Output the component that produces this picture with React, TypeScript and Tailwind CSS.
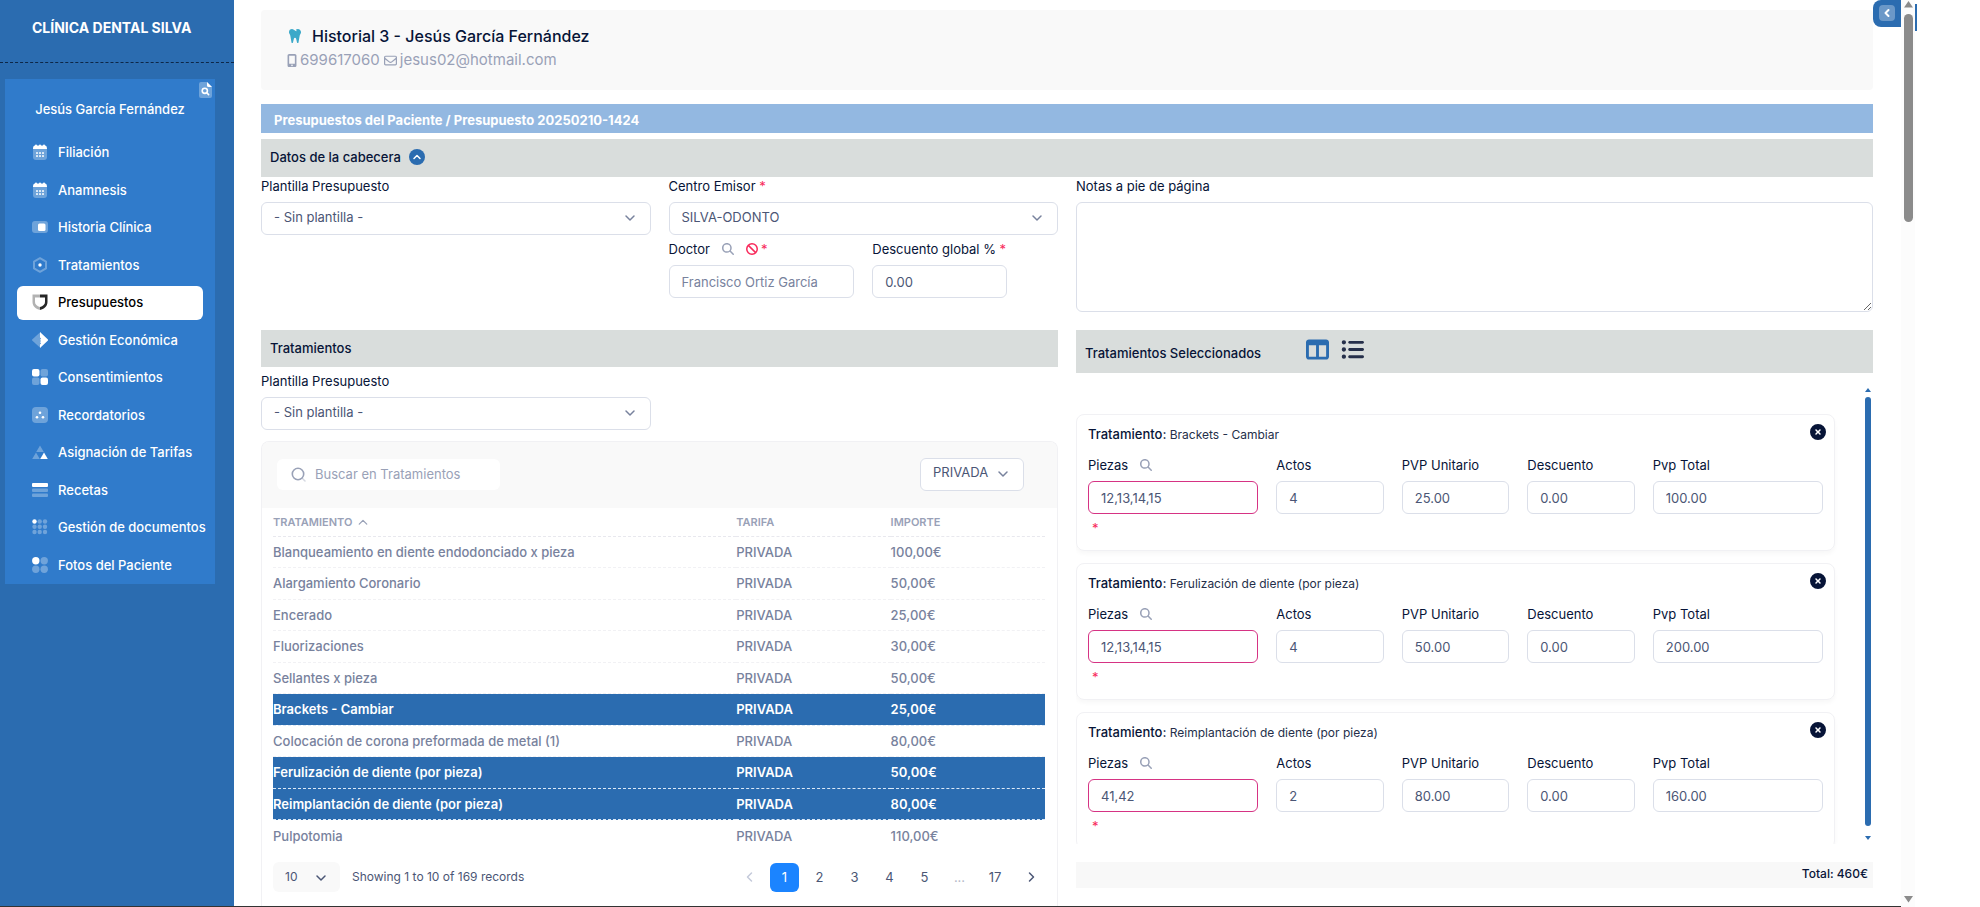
import { useState } from "react";
import type { ReactNode } from "react";
import {
    FaBan,
    FaCircleXmark,
    FaListUl,
    FaMagnifyingGlass,
    FaMobileScreenButton,
    FaRegEnvelope,
    FaTableColumns,
    FaTooth,
} from "react-icons/fa6";

interface ITreatment {
    name: string;
    price: string;
    selected?: boolean;
}

interface ISelectedTreatment {
    name: string;
    pieces: string;
    acts: string;
    unitPrice: string;
    discount: string;
    total: string;
}

const treatments: ITreatment[] = [
    { name: "Blanqueamiento en diente endodonciado x pieza", price: "100,00€" },
    { name: "Alargamiento Coronario", price: "50,00€" },
    { name: "Encerado", price: "25,00€" },
    { name: "Fluorizaciones", price: "30,00€" },
    { name: "Sellantes x pieza", price: "50,00€" },
    { name: "Brackets - Cambiar", price: "25,00€", selected: true },
    { name: "Colocación de corona preformada de metal (1)", price: "80,00€" },
    { name: "Ferulización de diente (por pieza)", price: "50,00€", selected: true },
    { name: "Reimplantación de diente (por pieza)", price: "80,00€", selected: true },
    { name: "Pulpotomia", price: "110,00€" },
];

const selectedTreatments: ISelectedTreatment[] = [
    { name: "Brackets - Cambiar", pieces: "12,13,14,15", acts: "4", unitPrice: "25.00", discount: "0.00", total: "100.00" },
    { name: "Ferulización de diente (por pieza)", pieces: "12,13,14,15", acts: "4", unitPrice: "50.00", discount: "0.00", total: "200.00" },
    { name: "Reimplantación de diente (por pieza)", pieces: "41,42", acts: "2", unitPrice: "80.00", discount: "0.00", total: "160.00" },
];

/* Duotone menu icons, drawn on a 16x16 grid */
const Calendar = () => (
    <>
        <rect x="1" y="3" width="14" height="13" rx="3" opacity=".3" />
        <path d="M3 1.500a1 1 0 0 1 2 0h2a1 1 0 0 1 2 0h2a1 1 0 0 1 2 0c1.500.200 2 1.500 2 3.500H1c0-2 .500-3.300 2-3.500z" />
        <g opacity=".8">
            <rect x="4" y="8" width="2" height="2" rx=".5" />
            <rect x="7" y="8" width="2" height="2" rx=".5" />
            <rect x="10" y="8" width="2" height="2" rx=".5" />
            <rect x="4" y="11" width="2" height="2" rx=".5" />
            <rect x="7" y="11" width="2" height="2" rx=".5" />
            <rect x="10" y="11" width="2" height="2" rx=".5" />
        </g>
    </>
);

const menuItems: { label: string; icon: ReactNode }[] = [
    { label: "Filiación", icon: <Calendar /> },
    { label: "Anamnesis", icon: <Calendar /> },
    {
        label: "Historia Clínica",
        icon: (
            <>
                <rect x="0" y="2" width="16" height="12" rx="3" opacity=".3" />
                <rect x="6" y="4.500" width="7.500" height="7.500" rx="1.500" />
            </>
        ),
    },
    {
        label: "Tratamientos",
        icon: (
            <>
                <path d="M8 1.200 14 4.600v6.800L8 14.800 2 11.400V4.600z" fill="none" stroke="currentColor" strokeWidth="2" strokeLinejoin="round" opacity=".3" />
                <circle cx="8" cy="8" r="1.700" />
            </>
        ),
    },
    {
        label: "Presupuestos",
        icon: (
            <>
                <path d="M8 0.500H0.500v7.500c0 4.500 3.500 7 7.500 8v-3C5 12 3 10.500 3 8V3.500h5z" opacity=".3" />
                <path d="M8 0.500h7.500v7.500c0 4.500-3.500 7-7.500 8v-3c3-1 5-2.500 5-5V3.500H8z" opacity=".85" />
            </>
        ),
    },
    {
        label: "Gestión Económica",
        icon: (
            <>
                <path d="M8.500 0v16L.400 8.700a1 1 0 0 1 0-1.400z" opacity=".3" />
                <path d="M8 0l7.700 7.300a1 1 0 0 1 0 1.400L8 16v-3.500l1-1-1-1.500 1-1-1-1 1-1.500-1-1z" />
            </>
        ),
    },
    {
        label: "Consentimientos",
        icon: (
            <>
                <rect x="0" y="0" width="7.500" height="7.500" rx="2" />
                <rect x="8.500" y="8.500" width="7.500" height="7.500" rx="2" />
                <rect x="8.500" y="0" width="7.500" height="7.500" rx="2" opacity=".3" />
                <rect x="0" y="8.500" width="7.500" height="7.500" rx="2" opacity=".3" />
            </>
        ),
    },
    {
        label: "Recordatorios",
        icon: (
            <>
                <rect width="16" height="16" rx="4" opacity=".3" />
                <circle cx="8" cy="5.800" r="1.300" />
                <circle cx="5" cy="10.300" r="1.300" />
                <circle cx="11" cy="10.300" r="1.300" />
            </>
        ),
    },
    {
        label: "Asignación de Tarifas",
        icon: (
            <>
                <path d="M8 1.500l3.800 6.500H4.200zM4 8.500 7.800 15H.200z" opacity=".3" />
                <path d="M12 8.500l3.800 6.500H8.200z" />
            </>
        ),
    },
    {
        label: "Recetas",
        icon: (
            <>
                <rect y="1" width="16" height="4" rx="1" />
                <rect y="6.500" width="16" height="3.500" rx="1" opacity=".3" />
                <rect y="11.500" width="16" height="3.500" rx="1" opacity=".3" />
            </>
        ),
    },
    {
        label: "Gestión de documentos",
        icon: (
            <>
                <circle cx="2.500" cy="2.500" r="2.200" />
                <g opacity=".3">
                    <circle cx="7.700" cy="2.500" r="2.200" />
                    <circle cx="13" cy="2.500" r="2.200" />
                    <circle cx="2.500" cy="7.700" r="2.200" />
                    <circle cx="7.700" cy="7.700" r="2.200" />
                    <circle cx="13" cy="7.700" r="2.200" />
                    <circle cx="2.500" cy="13" r="2.200" />
                    <circle cx="7.700" cy="13" r="2.200" />
                    <circle cx="13" cy="13" r="2.200" />
                </g>
            </>
        ),
    },
    {
        label: "Fotos del Paciente",
        icon: (
            <>
                <circle cx="3.800" cy="3.800" r="3.700" />
                <g opacity=".3">
                    <circle cx="12.200" cy="3.800" r="3.700" />
                    <circle cx="3.800" cy="12.200" r="3.700" />
                    <circle cx="12.200" cy="12.200" r="3.700" />
                </g>
            </>
        ),
    },
];

const Chevron = ({ className, d = "M2 4l4 4 4-4" }: { className?: string; d?: string }) => (
    <svg viewBox="0 0 12 12" className={className} fill="none" stroke="currentColor" strokeWidth="1.500" strokeLinecap="round" strokeLinejoin="round" aria-hidden="true">
        <path d={d} />
    </svg>
);

const Required = () => <span className="text-[#f8285a]">*</span>;

interface SelectProps {
    id: string;
    options: string[];
    label?: string;
}

const Select = ({ id, options, label }: SelectProps) => (
    <div className="relative">
        <select
            id={id}
            aria-label={label}
            className="block h-[33px] w-full appearance-none rounded-md border border-[#dbdfe9] bg-white pr-7 pb-1 pl-3 text-[#4b5675] outline-none"
        >
            {options.map((option) => (
                <option key={option}>{option}</option>
            ))}
        </select>
        <Chevron className="pointer-events-none absolute top-2.5 right-[15px] size-3 text-[#78829d]" />
    </div>
);

interface FieldProps {
    id: string;
    label: string;
    value: string;
    className: string;
    search?: boolean;
}

const Field = ({ id, label, value, className, search }: FieldProps) => (
    <div className={className}>
        <div className="flex h-5 items-center gap-3">
            <label htmlFor={id}>{label}</label>
            {search && (
                <button type="button" aria-label="Buscar piezas" className="text-[#99a1b7]">
                    <FaMagnifyingGlass className="size-3" />
                </button>
            )}
        </div>
        <input
            id={id}
            defaultValue={value}
            className={
                search
                    ? "mt-1.5 h-[33px] w-full rounded-md border border-[#d63384] px-3 text-[#4b5675] outline-none"
                    : "mt-1.5 h-[33px] w-full rounded-md border border-[#dbdfe9] px-3 text-[#4b5675] outline-none"
            }
        />
        {search && <p className="mt-1 h-4 pl-1"><Required /></p>}
    </div>
);

const Sidebar = () => {
    const [active, setActive] = useState("Presupuestos");
    return (
        <aside className="w-[234px] shrink-0 bg-[#2b6cb0] text-white">
            <div className="flex h-[63px] items-start border-b border-dashed border-[#0d2747] pt-4 pl-8">
                <h1 className="text-sm leading-6 font-bold">CLÍNICA DENTAL SILVA</h1>
            </div>

            <div className="mt-4 mr-[19px] ml-[5px] bg-[#307bcb] pb-px">
                <div className="flex h-5 justify-end pt-px pr-[3px]">
                    <button type="button" aria-label="Buscar paciente">
                        <svg viewBox="0 0 13 16" className="h-4 w-[13px]" fill="currentColor">
                            <path d="M2 0h6l5 5v9a2 2 0 0 1-2 2H2a2 2 0 0 1-2-2V2a2 2 0 0 1 2-2z" opacity=".3" />
                            <path d="M8 0l5 5H9.500A1.500 1.500 0 0 1 8 3.500z" />
                            <circle cx="5.800" cy="8.800" r="2.600" fill="none" stroke="currentColor" strokeWidth="1.600" />
                            <path d="M7.800 10.800l1.800 1.800" stroke="currentColor" strokeWidth="1.600" strokeLinecap="round" />
                        </svg>
                    </button>
                </div>
                <p className="pb-4 text-center leading-[21px] font-medium">Jesús García Fernández</p>

                {/* Patient menu */}
                <nav className="flex h-[447px] flex-col justify-between px-3">
                    {menuItems.map((item) => (
                        <button
                            key={item.label}
                            type="button"
                            onClick={() => setActive(item.label)}
                            className={
                                item.label === active
                                    ? "flex h-[34px] items-center gap-2.5 rounded-md bg-white px-[15px] pb-0.5 font-medium text-black"
                                    : "flex h-[34px] items-center gap-2.5 rounded-md px-[15px] pb-0.5 font-medium text-white"
                            }
                        >
                            <svg viewBox="0 0 16 16" className="size-4 shrink-0" fill="currentColor" aria-hidden="true">
                                {item.icon}
                            </svg>
                            <span className="whitespace-nowrap">{item.label}</span>
                        </button>
                    ))}
                </nav>
            </div>
        </aside>
    );
};

const HeaderForm = () => (
    <div className="grid grid-cols-2 gap-[18px]">
        <div className="grid grid-cols-2 gap-[18px]">
            <div>
                <label htmlFor="plantilla" className="mb-1.5 block leading-[19px]">Plantilla Presupuesto</label>
                <Select id="plantilla" options={["- Sin plantilla -"]} />
            </div>

            <div>
                <label htmlFor="centro" className="mb-1.5 block leading-[19px]">
                    Centro Emisor <Required />
                </label>
                <Select id="centro" options={["SILVA-ODONTO"]} />

                <div className="mt-1 grid grid-cols-2 gap-[18px]">
                    <div>
                        <div className="flex h-5 items-center">
                            <label htmlFor="doctor">Doctor</label>
                            <button type="button" aria-label="Buscar doctor" className="ml-3 text-[#99a1b7]">
                                <FaMagnifyingGlass className="size-3" />
                            </button>
                            <button type="button" aria-label="Quitar doctor" className="mr-[3px] ml-3 text-[#f8285a]">
                                <FaBan className="size-3" />
                            </button>
                            <Required />
                        </div>
                        <input
                            id="doctor"
                            placeholder="Francisco Ortiz García"
                            className="mt-1.5 h-[33px] w-full rounded-md border border-[#dbdfe9] px-3 outline-none placeholder:text-[#78829d]"
                        />
                    </div>
                    <div>
                        <label htmlFor="descuento" className="block h-5 leading-5 whitespace-nowrap">
                            Descuento global % <Required />
                        </label>
                        <input
                            id="descuento"
                            defaultValue="0.00"
                            className="mt-1.5 h-[33px] w-[135px] rounded-md border border-[#dbdfe9] px-3 text-[#4b5675] outline-none"
                        />
                    </div>
                </div>
            </div>
        </div>

        <div>
            <label htmlFor="notas" className="mb-1.5 block leading-[19px]">Notas a pie de página</label>
            <textarea id="notas" className="block h-[110px] w-full rounded-md border border-[#dbdfe9] px-3 py-2 outline-none" />
        </div>
    </div>
);

const TreatmentTable = () => (
    <div className="mt-[11px] flex min-h-0 flex-1 flex-col overflow-hidden rounded-t-lg border-x border-t border-[#f1f1f4]">
        <div className="flex h-[66px] shrink-0 items-center justify-between bg-[#f9f9f9] pr-[33px] pb-0.5 pl-[15px]">
            <div className="flex h-[31px] w-[223px] items-center rounded-md bg-white pl-[14px]">
                <svg viewBox="0 0 15 15" className="size-[15px]" fill="none" stroke="#99a1b7" aria-hidden="true">
                    <circle cx="7" cy="7" r="5.700" strokeWidth="1.600" />
                    <path d="M11.500 11.500l2.500 2.500" strokeWidth="1.500" strokeLinecap="round" opacity=".4" />
                </svg>
                <input
                    type="search"
                    aria-label="Buscar en Tratamientos"
                    placeholder="Buscar en Tratamientos"
                    className="ml-[9px] min-w-0 flex-1 outline-none placeholder:text-[#99a1b7]"
                />
            </div>
            <div className="w-[104px]">
                <Select id="tarifa" label="Tarifa" options={["PRIVADA"]} />
            </div>
        </div>

        <div className="pr-3 pl-[11px]">
            <table className="h-[343px] w-full table-fixed border-collapse text-left">
                <thead>
                    <tr className="h-7 border-b border-dashed border-[#e8e8ee] text-[11px] text-[#99a1b7]">
                        <th className="w-3/5 font-semibold">
                            <button type="button" className="flex items-center gap-1.5">
                                TRATAMIENTO
                                <Chevron className="size-2.5" d="M1.500 8.500L6 4l4.500 4.500" />
                            </button>
                        </th>
                        <th className="w-1/5 font-semibold">TARIFA</th>
                        <th className="w-1/5 font-semibold">IMPORTE</th>
                    </tr>
                </thead>
                <tbody>
                    {treatments.map((treatment) => (
                        <tr
                            key={treatment.name}
                            className={
                                treatment.selected
                                    ? "h-[31px] border-y border-dashed border-[#dbe9f8] bg-[#2b6cb0] font-semibold text-white"
                                    : "h-[31px] border-b border-dashed border-[#f1f1f4] font-medium text-[#78829d] last:border-0"
                            }
                        >
                            <td>{treatment.name}</td>
                            <td>PRIVADA</td>
                            <td>{treatment.price}</td>
                        </tr>
                    ))}
                </tbody>
            </table>
        </div>

        {/* Pagination */}
        <div className="mt-[11px] flex items-center pr-3 pl-[11px] text-[#4b5675]">
            <div className="relative">
                <select aria-label="Registros por página" className="block h-[30px] w-[67px] appearance-none rounded-md bg-[#f9f9f9] pl-3 text-xs outline-none">
                    <option>10</option>
                </select>
                <Chevron className="pointer-events-none absolute top-2.5 right-[13px] size-3" />
            </div>
            <p className="ml-3 text-xs">Showing 1 to 10 of 169 records</p>
            <nav className="ml-auto flex items-center gap-1.5">
                <button type="button" aria-label="Anterior" disabled className="flex h-[29px] w-[29px] items-center justify-center text-[#c4cada]">
                    <Chevron className="size-3" d="M7.500 2l-4 4 4 4" />
                </button>
                <button type="button" className="h-[29px] w-[29px] rounded-md bg-[#1b84ff] text-white">1</button>
                <button type="button" className="h-[29px] w-[29px]">2</button>
                <button type="button" className="h-[29px] w-[29px]">3</button>
                <button type="button" className="h-[29px] w-[29px]">4</button>
                <button type="button" className="h-[29px] w-[29px]">5</button>
                <span className="w-[29px] text-center text-[#b5bac8]">...</span>
                <button type="button" className="h-[29px] w-[30px]">17</button>
                <button type="button" aria-label="Siguiente" className="flex h-[29px] w-[29px] items-center justify-center">
                    <Chevron className="size-3" d="M4.500 2l4 4-4 4" />
                </button>
            </nav>
        </div>
    </div>
);

const TreatmentCard = ({ treatment, index }: { treatment: ISelectedTreatment; index: number }) => (
    <article className="h-[137px] shrink-0 rounded-lg border border-[#f1f1f4] px-[11px] pt-[9px] shadow-[0_3px_4px_0_rgba(0,0,0,0.03)]">
        <div className="flex items-start justify-between">
            <h3 className="text-xs leading-5 font-normal text-[#252f4a]">
                <span className="text-[13px] font-medium text-[#071437]">Tratamiento:</span> {treatment.name}
            </h3>
            <button type="button" aria-label="Quitar tratamiento" className="-mr-[3px] text-[#071437]">
                <FaCircleXmark className="size-4" />
            </button>
        </div>
        <div className="mt-2.5 grid grid-cols-12 gap-[18px]">
            <Field id={`piezas-${index}`} label="Piezas" value={treatment.pieces} className="col-span-3" search />
            <Field id={`actos-${index}`} label="Actos" value={treatment.acts} className="col-span-2" />
            <Field id={`pvp-${index}`} label="PVP Unitario" value={treatment.unitPrice} className="col-span-2" />
            <Field id={`dto-${index}`} label="Descuento" value={treatment.discount} className="col-span-2" />
            <Field id={`total-${index}`} label="Pvp Total" value={treatment.total} className="col-span-3" />
        </div>
    </article>
);

const SelectedTreatments = () => (
    <section className="flex min-h-0 flex-col">
        <div className="flex h-[43px] shrink-0 items-center bg-[#d9dddc] px-[9px]">
            <h2 className="pt-0.5 font-medium">Tratamientos Seleccionados</h2>
            <button type="button" aria-label="Vista en columnas" className="mb-1 ml-[45px] text-[#2b6cb0]">
                <FaTableColumns className="size-[23px]" />
            </button>
            <button type="button" aria-label="Vista en lista" className="mb-1 ml-3 text-[#252f4a]">
                <FaListUl className="size-[23px]" />
            </button>
        </div>

        <div className="mt-3 flex h-[459px] shrink-0">
            <div className="flex min-w-0 flex-1 flex-col gap-3 overflow-hidden pt-[29px] pr-[30px]">
                {selectedTreatments.map((treatment, i) => (
                    <TreatmentCard key={treatment.name} treatment={treatment} index={i} />
                ))}
            </div>
            <div className="mr-0.5 flex w-1.5 flex-col items-center pt-[3px] pb-1">
                <svg viewBox="0 0 6 4" className="h-1 w-1.5" fill="#2b6cb0"><path d="M3 0l3 4H0z" /></svg>
                <div className="my-[5px] w-1.5 flex-1 rounded-full bg-[#2b6cb0]" />
                <svg viewBox="0 0 6 4" className="mt-[5px] h-1 w-1.5" fill="#2b6cb0"><path d="M0 0h6L3 4z" /></svg>
            </div>
        </div>

        <div className="mt-[18px] flex h-[26px] shrink-0 items-center justify-end bg-[#f8f8f8] pr-[5px] pb-0.5 text-xs font-medium">
            Total: 460€
        </div>
    </section>
);

const App = () => {
    return (
        <div className="flex h-screen overflow-hidden bg-white font-['Inter',sans-serif] text-[13px] leading-5 text-[#071437]">
            <div className="flex min-w-0 flex-1 flex-col">
                <div className="flex min-h-0 flex-1">
                    <Sidebar />

                    <main className="flex min-w-0 flex-1 flex-col pt-2.5 pl-[27px]">
                        {/* Patient header */}
                        <header className="h-20 shrink-0 rounded bg-[#f9f9f9] px-[26px] pt-4">
                            <div className="flex items-center">
                                <FaTooth className="size-4 text-[#3ba9c9]" />
                                <h2 className="ml-[9px] text-base leading-5 font-medium">Historial 3 - Jesús García Fernández</h2>
                            </div>
                            <p className="mt-1 flex items-center text-[15px] leading-5 text-[#99a1b7]">
                                <FaMobileScreenButton className="mr-[3px] h-[13px] w-[10px]" />
                                699617060
                                <FaRegEnvelope className="mr-[3px] ml-1 size-[13px]" />
                                <a href="mailto:jesus02@hotmail.com">jesus02@hotmail.com</a>
                            </p>
                        </header>

                        <div className="mt-3.5 flex h-[29px] shrink-0 items-center bg-[#93b8e1] px-[13px] pt-0.5 text-[13px] font-bold text-white">
                            Presupuestos del Paciente / Presupuesto 20250210-1424
                        </div>

                        <div className="mt-1.5 flex h-[38px] shrink-0 items-center bg-[#d9dddc] px-[9px] pb-0.5">
                            <h2 className="font-medium">Datos de la cabecera</h2>
                            <button type="button" aria-label="Plegar cabecera" className="ml-2 flex size-4 items-center justify-center rounded-full bg-[#2b6cb0] text-white">
                                <Chevron className="size-3" d="M3 7.500l3-3 3 3" />
                            </button>
                        </div>

                        <HeaderForm />

                        <div className="mt-[18px] grid min-h-0 flex-1 grid-cols-2 gap-[18px]">
                            <section className="flex min-h-0 flex-col">
                                <div className="flex h-[37px] shrink-0 items-center bg-[#d9dddc] px-[9px] pb-0.5">
                                    <h2 className="font-medium">Tratamientos</h2>
                                </div>
                                <div className="mt-1 grid grid-cols-2 gap-[18px]">
                                    <div>
                                        <label htmlFor="plantilla-tratamientos" className="mb-1.5 block leading-5">Plantilla Presupuesto</label>
                                        <Select id="plantilla-tratamientos" options={["- Sin plantilla -"]} />
                                    </div>
                                </div>
                                <TreatmentTable />
                            </section>

                            <SelectedTreatments />
                        </div>
                    </main>

                    <div className="w-7 shrink-0">
                        <button type="button" aria-label="Abrir panel" className="flex h-[27px] w-full items-center justify-center rounded-l-lg bg-[#2b6cb0] pb-0.5 text-white">
                            <span className="flex size-4 items-center justify-center rounded bg-white/30">
                                <svg viewBox="0 0 12 12" className="size-3" fill="none" stroke="currentColor" strokeWidth="2" strokeLinecap="round" strokeLinejoin="round">
                                    <path d="M7.500 3l-3 3 3 3" />
                                </svg>
                            </span>
                        </button>
                    </div>
                </div>
                <div className="h-px shrink-0 bg-[#333]" />
            </div>

            {/* Page scrollbar */}
            <div className="flex w-3.5 shrink-0 flex-col items-center justify-between bg-[#fcfcfc] pt-px pb-1">
                <div className="flex flex-col items-center">
                    <svg viewBox="0 0 9 7" className="h-[7px] w-[9px]" fill="#8b8b8b"><path d="M4.500 0L9 6.500H0z" /></svg>
                    <div className="mt-1.5 h-52 w-[9px] rounded-full bg-[#8b8b8b]" />
                </div>
                <svg viewBox="0 0 9 7" className="h-[7px] w-[9px]" fill="#8b8b8b"><path d="M0 0h9L4.500 6.500z" /></svg>
            </div>
            <div className="w-[65px] shrink-0 pt-1">
                <div className="h-[27px] w-0.5 bg-[#2b6cb0]" />
            </div>
        </div>
    );
};

export default App;
